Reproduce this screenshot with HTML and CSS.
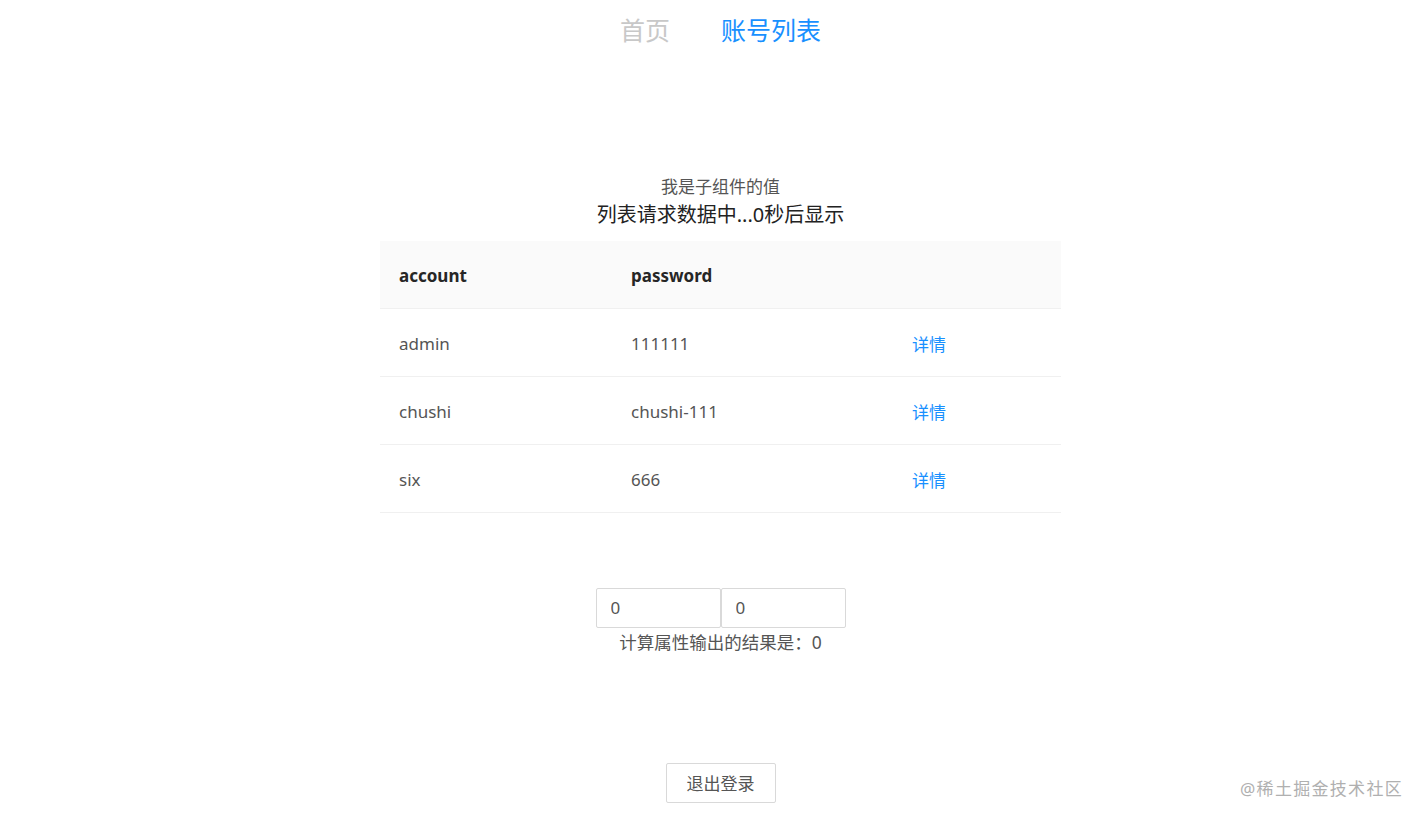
FILE: index.html
```html
<!DOCTYPE html>
<html lang="zh-CN">
<head>
    <meta charset="UTF-8">
    <meta name="viewport" content="width=device-width, initial-scale=1.0">
    <title>账号列表</title>
    <link rel="stylesheet" href="styles.css">
</head>
<body>
    <div class="app">
        <div class="nav">
            <a class="nav-link">首页</a>
            <a class="nav-link active">账号列表</a>
        </div>

        <div class="child-value">我是子组件的值</div>
        <div class="list-title">列表请求数据中...0秒后显示</div>

        <table class="account-table">
            <thead>
                <tr>
                    <th class="col-account">account</th>
                    <th class="col-password">password</th>
                    <th class="col-action"></th>
                </tr>
            </thead>
            <tbody>
                <tr>
                    <td>admin</td>
                    <td>111111</td>
                    <td><a class="detail">详情</a></td>
                </tr>
                <tr>
                    <td>chushi</td>
                    <td>chushi-111</td>
                    <td><a class="detail">详情</a></td>
                </tr>
                <tr>
                    <td>six</td>
                    <td>666</td>
                    <td><a class="detail">详情</a></td>
                </tr>
            </tbody>
        </table>

        <div class="calc">
            <div class="calc-inputs"><input class="num-input" type="text" value="0"><input class="num-input" type="text" value="0"></div>
            <div class="calc-result">计算属性输出的结果是：0</div>
        </div>

        <div class="logout">
            <button class="logout-btn">退出登录</button>
        </div>
    </div>

    <div class="watermark">@稀土掘金技术社区</div>
</body>
</html>
```

FILE: styles.css
```css
*{
   margin: 0;
   padding: 0;
   box-sizing: border-box;
}
body{
   background-color: #fff;
   font-family: "Noto Sans", "Noto Sans CJK SC", sans-serif;
   color: #555;
   height: 820px;
   overflow: hidden;
}
.app{
   padding-left: 17px;
   display: flex;
   flex-direction: column;
   align-items: center;
}
/* top nav */
.nav{
   height: 58px;
   display: flex;
   align-items: center;
   justify-content: center;
   gap: 51px;
}
.nav-link{
   font-size: 25px;
   color: #c8c8c8;
   cursor: pointer;
}
.nav-link.active{
   color: #1890ff;
}
.child-value{
   margin-top: 116px;
   font-size: 17px;
   line-height: 26px;
   color: #555;
}
.list-title{
   font-size: 20px;
   line-height: 30px;
   color: #222;
   margin-bottom: 11px;
}
/* table */
.account-table{
   width: 681px;
   border-collapse: collapse;
   table-layout: fixed;
   font-size: 17px;
}
.col-account{
   width: 232px;
}
.col-password{
   width: 281px;
}
.account-table th{
   background-color: #fafafa;
   color: #262626;
   font-weight: 700;
   text-align: left;
   height: 67px;
   padding: 3px 19px 0;
   border-bottom: 1px solid #f0f0f0;
}
.account-table td{
   height: 68px;
   padding: 2px 19px 0;
   border-bottom: 1px solid #f0f0f0;
   color: #555;
}
.detail{
   color: #1890ff;
   cursor: pointer;
}
/* computed */
.calc{
   margin-top: 75px;
   display: flex;
   flex-direction: column;
   align-items: center;
}
.calc-inputs{
   display: flex;
}
.num-input{
   width: 125px;
   height: 40px;
   border: 1px solid #d9d9d9;
   border-radius: 2px;
   padding-left: 14px;
   font-size: 17px;
   font-family: "Noto Sans", sans-serif;
   color: #555;
   outline: none;
}
.calc-result{
   font-size: 17.5px;
   line-height: 28px;
   color: #555;
}
.logout{
   margin-top: 107px;
}
.logout-btn{
   width: 110px;
   height: 40px;
   background-color: #fff;
   border: 1px solid #d9d9d9;
   border-radius: 2px;
   font-size: 17px;
   font-family: "Noto Sans", "Noto Sans CJK SC", sans-serif;
   color: #555;
   cursor: pointer;
}
.watermark{
   position: absolute;
   right: 21px;
   top: 775px;
   font-size: 17px;
   color: #b0b0b0;
   letter-spacing: 1.3px;
}
```
